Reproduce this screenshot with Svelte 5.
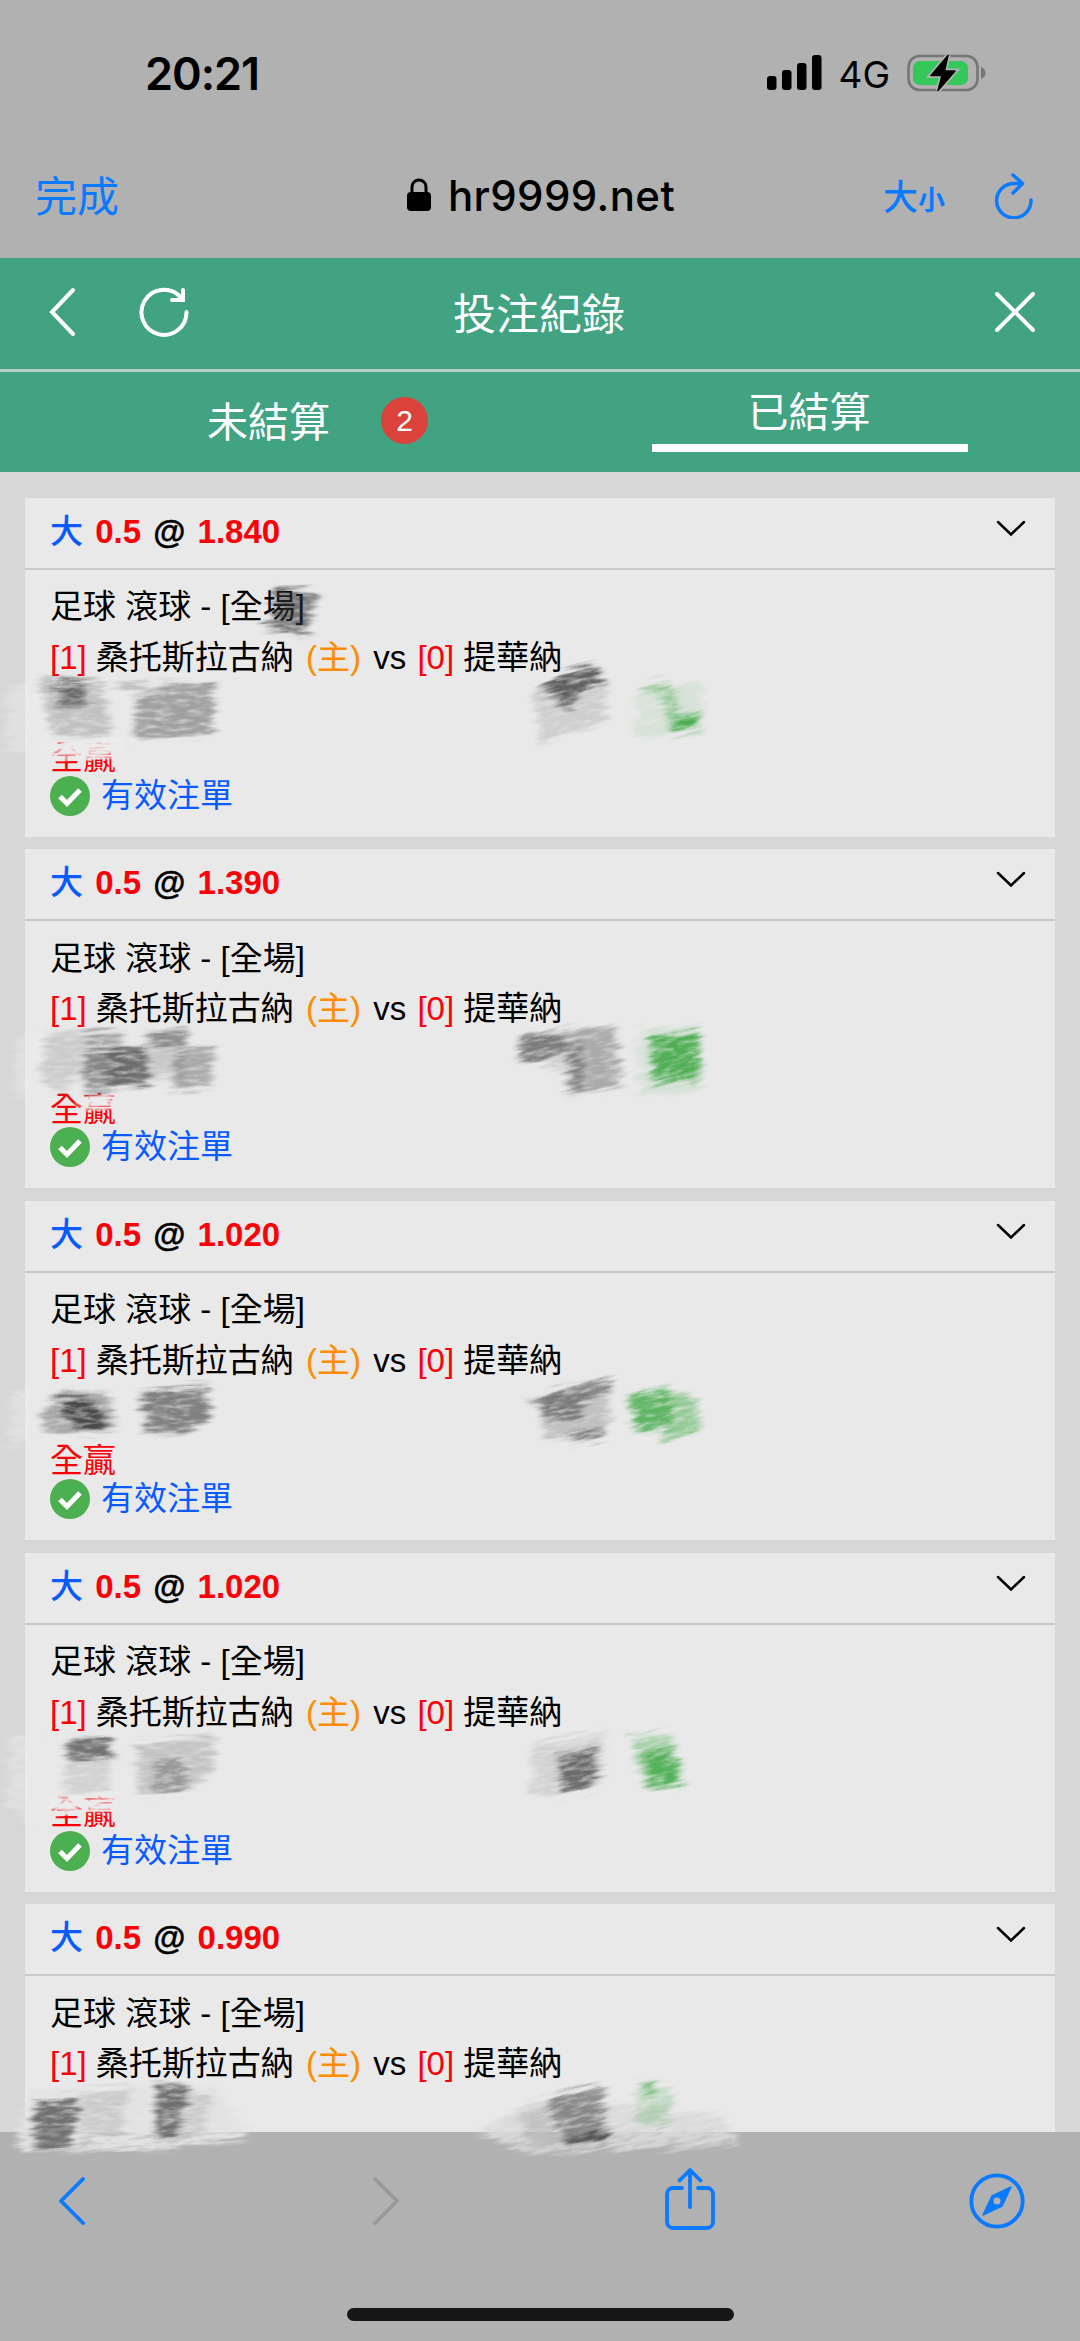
<script>
  const bets = ["1.840", "1.390", "1.020", "1.020", "0.990"];

  // pencil smudges: [points, colour, opacity]
  const ink = "#333";
  const green = "#2fa336";
  const pale = "#ebebeb";
  const leftSmudges = [
    ["273,586 317,595 307,635 264,627 274,613", ink, 0.65],
    ["8,684 40,676 46,758 6,752", pale, 0.5],
    ["38,678 101,680 111,736 54,738", ink, 0.22],
    ["56,682 86,683 84,706 58,708", ink, 0.6],
    ["136,700 170,683 214,683 211,737 134,737", ink, 0.4],
    ["108,682 151,683 148,694 134,692", ink, 0.25],
    ["45,738 130,738 118,758 45,758", pale, 1],
    ["45,738 130,738 118,757 45,757", pale, 1],

    ["16,1040 46,1032 44,1094 16,1100", pale, 0.5],
    ["46,1033 124,1030 120,1075 40,1078", ink, 0.16],
    ["40,1078 70,1078 68,1090 56,1092", ink, 0.16],
    ["83,1052 147,1048 149,1088 86,1092", ink, 0.45],
    ["108,1051 146,1049 148,1086 108,1088", ink, 0.4],
    ["87,1032 124,1030 120,1042 90,1042", ink, 0.3],
    ["147,1033 186,1030 186,1046 152,1046", ink, 0.45],
    ["177,1050 214,1047 211,1087 172,1090", ink, 0.35],
    ["140,1040 190,1040 180,1075 150,1080", ink, 0.18],
    ["80,1092 120,1092 116,1107 80,1107", pale, 1],

    ["12,1390 36,1384 30,1440 10,1446", pale, 0.5],
    ["43,1408 60,1390 108,1393 116,1428 80,1434 44,1432", ink, 0.35],
    ["56,1400 90,1397 106,1420 99,1432 78,1432 66,1412", ink, 0.8],
    ["140,1390 207,1386 209,1417 180,1433 146,1433", ink, 0.58],

    ["10,1740 40,1730 38,1826 8,1810", pale, 0.5],
    ["70,1737 112,1739 110,1759 66,1757", ink, 0.65],
    ["64,1755 116,1755 106,1790 62,1796", ink, 0.13],
    ["137,1743 214,1736 211,1772 188,1790 138,1795", ink, 0.2],
    ["156,1760 182,1757 188,1788 154,1793", ink, 0.3],
    ["45,1794 124,1792 118,1810 45,1815", pale, 1],
    ["45,1794 80,1794 80,1814 45,1814", pale, 1],

    ["15,2146 30,2092 215,2085 250,2135 172,2151 30,2150", "#e2e2e2", 1],
    ["35,2100 78,2100 71,2146 35,2146", ink, 0.65],
    ["156,2083 190,2083 176,2136 156,2138", ink, 0.65],
    ["80,2092 130,2088 120,2135 80,2138", ink, 0.13],
    ["180,2090 214,2095 200,2138 170,2142", ink, 0.12],
  ];
  const rightSmudges = [
    ["553,677 592,665 605,682 578,693 567,713 558,694 540,690", ink, 0.75],
    ["534,692 607,685 607,720 541,747", ink, 0.15],
    ["637,688 670,682 679,713 702,712 703,732 672,731 662,697", green, 0.4],
    ["672,728 680,718 700,717 696,728", green, 0.75],
    ["637,692 702,680 703,732 634,736", green, 0.1],

    ["521,1038 567,1030 567,1052 520,1062", ink, 0.6],
    ["567,1032 615,1025 622,1087 577,1096", ink, 0.35],
    ["567,1048 580,1046 582,1094 568,1095", ink, 0.4],
    ["525,1055 570,1050 572,1078", ink, 0.12],
    ["650,1037 698,1032 700,1077 654,1085", green, 0.8],
    ["636,1030 700,1023 702,1090 640,1096", green, 0.1],

    ["524,1402 558,1389 611,1379 608,1392 580,1404 582,1420 547,1420 542,1404", ink, 0.5],
    ["540,1395 610,1390 606,1435 545,1440", ink, 0.22],
    ["570,1432 606,1428 604,1436 572,1443", ink, 0.5],
    ["628,1395 668,1386 672,1425 638,1433", green, 0.75],
    ["668,1395 692,1392 702,1430 664,1440", green, 0.45],

    ["558,1755 597,1749 592,1790 562,1790", ink, 0.65],
    ["535,1745 605,1732 600,1790 530,1795", ink, 0.12],
    ["630,1735 670,1735 683,1785 645,1788", green, 0.35],
    ["645,1750 675,1750 680,1785 648,1787", green, 0.7],

    ["476,2133 530,2100 720,2115 741,2146 630,2148 530,2154", "#d9d9d9", 0.95],
    ["545,2097 602,2085 606,2140 570,2146", ink, 0.5],
    ["520,2115 550,2105 575,2142 530,2148", ink, 0.15],
    ["572,2138 606,2126 606,2142 570,2146", ink, 0.6],
    ["638,2087 671,2090 671,2126 635,2124", green, 0.22],
    ["640,2083 656,2080 654,2092 644,2094", green, 0.5],
  ];
  // the strokes on each side were drawn at their own slant
  const layers = [
    { angle: 3, smudges: leftSmudges },
    { angle: 13, smudges: rightSmudges },
  ];
</script>

<main>
  <header class="system">
    <div class="status">
      <span class="time">20:21</span>
      <div class="signals">
        <svg class="signal" viewBox="0 0 56 36" fill="#000">
          <rect x="0" y="21" width="9.500" height="14" rx="3" />
          <rect x="15" y="15" width="9.500" height="20" rx="3" />
          <rect x="30" y="8" width="9.500" height="27" rx="3" />
          <rect x="45" y="0" width="9.500" height="35" rx="3" />
        </svg>
        <span class="network">4G</span>
        <svg class="battery" viewBox="0 0 80 40">
          <rect x="1.500" y="3" width="69" height="34" rx="11" fill="none" stroke="#767676" stroke-width="2.600" />
          <rect x="6" y="8" width="55" height="24" rx="7" fill="#34c759" />
          <path d="M74 14c6 2 6 10 0 12z" fill="#767676" />
          <path d="M41 2.500 24 22.500h11l-4 15 17-19.500H37.500z" fill="#000" stroke="#b1b1b1" stroke-width="5" paint-order="stroke" />
          <path d="M41 2.500 24 22.500h11l-4 15 17-19.500H37.500z" stroke="#000" stroke-width="1.500" stroke-linejoin="round" />
        </svg>
      </div>
    </div>
    <div class="address">
      <span class="done">完成</span>
      <div class="site">
        <svg class="lock" viewBox="0 0 24 34">
          <path d="M5 16V9a7 7 0 0 1 14 0v7" fill="none" stroke="#000" stroke-width="3" />
          <rect x="0" y="14" width="24" height="19" rx="4" />
        </svg>
        <span>hr9999.net</span>
      </div>
      <div class="tools">
        <span class="size">大<small>小</small></span>
        <svg class="reload" viewBox="0 0 40 46" fill="none" stroke="#0a7aff" stroke-width="3.500" stroke-linecap="round" stroke-linejoin="round">
          <path d="M28 10.500H20A17.200 17.200 0 1 0 37 27" />
          <path d="M19 2l9.500 8.500L19 20" />
        </svg>
      </div>
    </div>
  </header>

  <nav>
    <div class="left">
      <svg class="back" viewBox="0 0 26 50"><path d="M24 3 3 25l21 22" /></svg>
      <svg class="refresh" viewBox="0 0 50 50">
        <path d="M47.500 25A22.500 22.500 0 1 1 41 9.500L44 13" />
        <path d="M44 3v10H33" />
      </svg>
    </div>
    <h1>投注紀錄</h1>
    <svg class="close" viewBox="0 0 40 40"><path d="M2 2l36 36M38 2 2 38" /></svg>
  </nav>

  <div class="tabs">
    <div class="tab open"><span>未結算</span><b>2</b></div>
    <div class="tab"><span class="active">已結算</span></div>
  </div>

  <section>
    {#each bets as odds}
      <article>
        <div class="head">
          <p><span class="blue pick">大</span> <span class="red">0.5</span> <span class="at">@</span> <span class="red">{odds}</span></p>
          <svg viewBox="0 0 30 18"><path d="M2 2l13 12.500L28 2" /></svg>
        </div>
        <div class="body">
          <p>足球 滾球 - [全場]</p>
          <p><span class="red">[1]</span> 桑托斯拉古納 <span class="orange">(主)</span> vs <span class="red away">[0]</span> 提華納</p>
          <p class="result red">全贏</p>
          <p class="valid blue">
            <svg viewBox="0 0 40 40">
              <circle cx="20" cy="20" r="20" fill="#4caf50" />
              <path d="M10 20.500l7 7L30 14" fill="none" stroke="#fff" stroke-width="5" />
            </svg>
            有效注單
          </p>
        </div>
      </article>
    {/each}
  </section>

  <footer>
    <div class="bar">
      <svg class="prev" viewBox="0 0 28 48"><path d="M25 2 3 24l22 22" /></svg>
      <svg class="next" viewBox="0 0 28 48"><path d="M3 2l22 22L3 46" /></svg>
      <svg class="share" viewBox="0 0 50 62">
        <path d="M17 20H8a6 6 0 0 0-6 6v28a6 6 0 0 0 6 6h34a6 6 0 0 0 6-6V26a6 6 0 0 0-6-6h-9" />
        <path d="M25 39V3M14.500 12.500 25 2l10.500 10.500" />
      </svg>
      <svg class="compass" viewBox="0 0 56 56">
        <circle cx="28" cy="28" r="25.700" />
        <path d="M42 14 33 33 14 42l9-19z" fill="#0a7aff" stroke-width="1.500" />
        <circle cx="28" cy="28" r="3.500" fill="#b1b1b1" stroke="none" />
      </svg>
    </div>
    <div class="home"></div>
  </footer>

  <svg class="smudges" viewBox="0 0 1080 2341">
    <filter id="pencil" filterUnits="userSpaceOnUse" x="-700" y="500" width="1800" height="1900" color-interpolation-filters="sRGB">
      <feTurbulence type="fractalNoise" baseFrequency="0.02 0.2" numOctaves="3" seed="7" result="tear" />
      <feTurbulence type="fractalNoise" baseFrequency="0.06 0.25" numOctaves="4" seed="21" result="grain" />
      <feGaussianBlur in="SourceGraphic" stdDeviation="3.5 2" result="soft" />
      <feDisplacementMap in="soft" in2="tear" scale="18" xChannelSelector="R" result="torn" />
      <feColorMatrix in="grain" values="0 0 0 0 0  0 0 0 0 0  0 0 0 0 0  0 1.5 0 0 0.15" result="streaks" />
      <feComposite in="torn" in2="streaks" operator="in" />
      <feGaussianBlur stdDeviation="0.7" />
    </filter>
    {#each layers as { angle, smudges }}
      <g filter="url(#pencil)" transform="rotate({-angle})">
        <g transform="rotate({angle})">
          {#each smudges as [points, fill, opacity]}
            <polygon {points} {fill} {opacity} />
          {/each}
        </g>
      </g>
    {/each}
  </svg>
</main>

<style>
  :global(body) {
    background: #b1b1b1;
  }

  main {
    position: relative;
    display: flex;
    flex-direction: column;
    width: 1080px;
    height: 2341px;
    overflow: hidden;
    background: #d7d7d7;
    font-family: "Liberation Sans", "Noto Sans CJK TC", sans-serif;
    color: #000;
  }

  p,
  h1 {
    margin: 0;
  }

  svg {
    display: block;
    flex: none;
  }

  .system {
    flex: none;
    box-sizing: border-box;
    height: 258px;
    background: #b1b1b1;
    font-family: Inter, "Noto Sans CJK TC", sans-serif;
  }

  .status {
    display: flex;
    justify-content: space-between;
    align-items: center;
    height: 146px;
    padding: 0 93px 0 145px;
  }

  .time {
    font-size: 45px;
    font-weight: 600;
    letter-spacing: -1px;
  }

  .signals {
    display: flex;
    align-items: center;
  }

  .signal {
    width: 56px;
    height: 36px;
  }

  .network {
    margin: 3px 17px 0 15px;
    font-size: 37px;
  }

  .battery {
    width: 80px;
    height: 40px;
  }

  .address {
    display: grid;
    grid-template-columns: 1fr auto 1fr;
    align-items: center;
    height: 100px;
    padding: 0 46px 0 35px;
    color: #0a7aff;
  }

  .done {
    padding-bottom: 6px;
    font-size: 42px;
  }

  .site {
    display: flex;
    align-items: center;
    gap: 17px;
    padding: 0 0 2px 13px;
    color: #000;
    font-size: 42px;
    font-weight: 500;
    letter-spacing: 0.4px;
  }

  .lock {
    width: 24px;
    height: 34px;
  }

  .tools {
    display: flex;
    justify-content: flex-end;
    align-items: center;
    gap: 49px;
  }

  .size {
    font-size: 35px;
    font-weight: 500;
    padding-bottom: 3px;
  }

  .size small {
    font-size: 27px;
    font-weight: 700;
  }

  .reload {
    width: 40px;
    height: 46px;
  }

  nav {
    display: grid;
    grid-template-columns: 1fr auto 1fr;
    align-items: center;
    flex: none;
    box-sizing: border-box;
    height: 114px;
    padding: 0 45px 3px 49px;
    border-bottom: 3px solid #b8cfc7;
    background: #41a381;
    color: #fff;
  }

  nav svg {
    fill: none;
    stroke: #fff;
    stroke-width: 4;
    stroke-linecap: round;
  }

  .left {
    display: flex;
    align-items: center;
    gap: 64px;
  }

  .back {
    width: 26px;
    height: 50px;
  }

  .refresh {
    width: 50px;
    height: 50px;
  }

  .close {
    width: 40px;
    height: 40px;
    justify-self: end;
  }

  h1 {
    padding: 0 6px 3px 0;
    font-size: 43px;
    font-weight: 400;
  }

  .tabs {
    display: flex;
    flex: none;
    height: 100px;
    background: #41a381;
    color: #fff;
    font-size: 41px;
  }

  .tab {
    display: flex;
    justify-content: center;
    align-items: flex-start;
    box-sizing: border-box;
    width: 50%;
  }

  .open {
    align-items: center;
    gap: 51px;
    padding: 0 0 3px 95px;
  }

  .open span {
    padding-bottom: 4px;
  }

  .tab b {
    width: 47px;
    height: 47px;
    border-radius: 50%;
    background: #db423b;
    font-size: 30px;
    font-weight: 400;
    line-height: 47px;
    text-align: center;
  }

  .active {
    box-sizing: border-box;
    width: 316px;
    height: 80px;
    padding-right: 2px;
    border-bottom: 8px solid #fff;
    line-height: 83px;
    text-align: center;
  }

  section {
    display: flex;
    flex-direction: column;
    flex: 1;
    gap: 12.7px;
    min-height: 0;
    overflow: hidden;
    padding: 25.500px 25px 0;
    font-size: 33px;
  }

  article {
    flex: none;
    height: 339px;
    background: #e9e9e9;
  }

  .head {
    display: flex;
    justify-content: space-between;
    align-items: center;
    box-sizing: border-box;
    height: 72px;
    padding: 0 29px 8px 25px;
    border-bottom: 2px solid #c8c8c8;
    font-weight: 700;
  }

  .head p {
    word-spacing: 3px;
  }

  .pick {
    font-weight: 500;
  }

  .at {
    -webkit-text-stroke: 0.4px #000;
  }

  .head svg {
    width: 30px;
    height: 18px;
    fill: none;
    stroke: #000;
    stroke-width: 2.5;
    stroke-linecap: round;
  }

  .body {
    padding: 12.500px 25px 0;
    line-height: 50.500px;
    white-space: nowrap;
  }

  .result {
    margin-top: 50px;
  }

  .valid {
    display: flex;
    align-items: center;
    gap: 11px;
    margin-top: -13px;
  }

  .valid svg {
    width: 40px;
    height: 40px;
  }

  .red {
    color: #fb0007;
  }

  .blue {
    color: #0a5bff;
  }

  .orange {
    margin: 0 3px;
    color: #ff8c00;
  }

  .away {
    margin-left: 2px;
  }

  footer {
    display: flex;
    flex-direction: column;
    justify-content: space-between;
    align-items: center;
    flex: none;
    box-sizing: border-box;
    height: 209px;
    padding-bottom: 20px;
    background: #b1b1b1;
  }

  .bar {
    display: flex;
    align-items: center;
    box-sizing: border-box;
    width: 100%;
    height: 137px;
    padding-left: 58px;
  }

  .bar svg {
    fill: none;
    stroke: #0a7aff;
    stroke-width: 3.8;
    stroke-linecap: round;
    stroke-linejoin: round;
  }

  .prev,
  .next {
    width: 28px;
    height: 48px;
  }

  .bar .next {
    margin-left: 286px;
    stroke: #999;
  }

  .share {
    width: 50px;
    height: 62px;
    margin: -4px 0 0 265px;
  }

  .compass {
    width: 56px;
    height: 56px;
    margin-left: 254px;
  }

  .home {
    width: 387px;
    height: 13px;
    border-radius: 7px;
    background: #161616;
  }

  .smudges {
    position: absolute;
    top: 0;
    left: 0;
    width: 1080px;
    height: 2341px;
    pointer-events: none;
  }
</style>
